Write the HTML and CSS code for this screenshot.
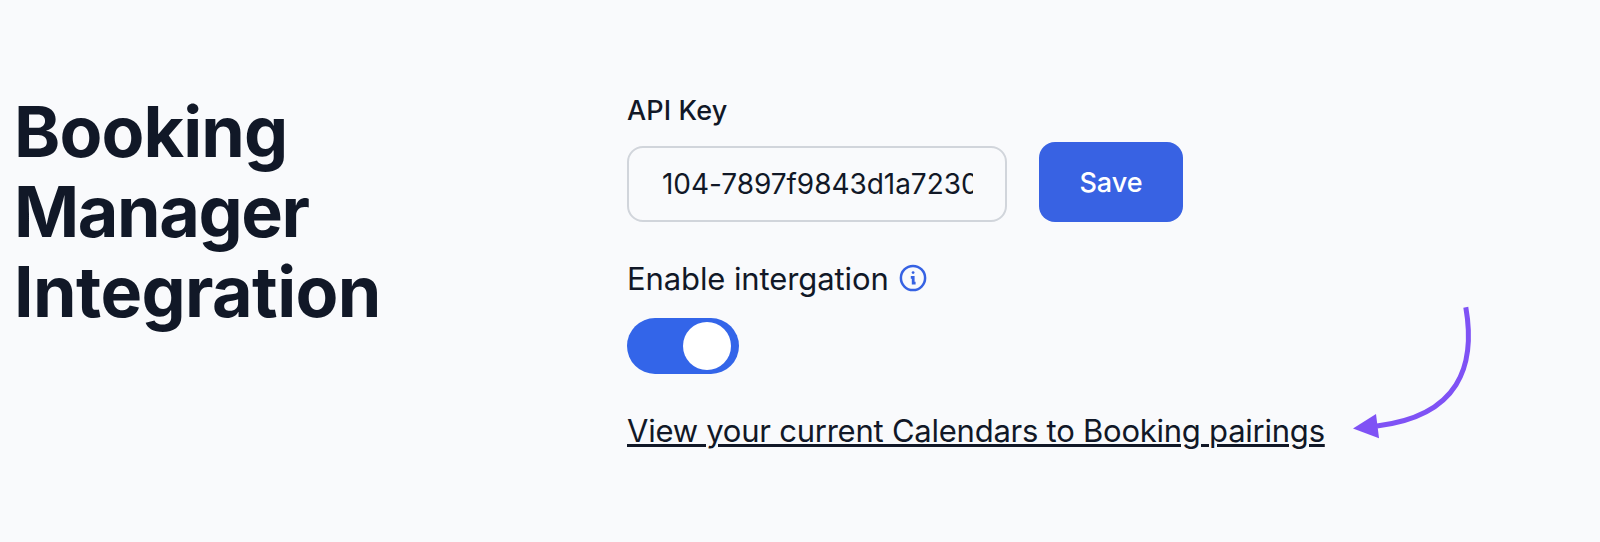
FILE: index.html
```
<!DOCTYPE html>
<html lang="en">
	<head>
		<meta charset="UTF-8">
		<meta name="viewport" content="width=device-width, initial-scale=1.0">
		<title>Booking Manager Integration</title>
		<link rel="stylesheet" href="styles.css">
	</head>
	<body>
		<main class="settings">
			<h1><span class="wide">Booking</span> Manager <span class="wider">Integration</span></h1>
			<form class="fields">
				<label class="key-label" for="api-key">API Key</label>
				<div class="key-row">
					<input class="key-input" type="text" id="api-key" value="104-7897f9843d1a7230">
					<button class="save" type="button">Save</button>
				</div>
				<div class="enable">
					<span class="enable-text">Enable intergation</span>
					<svg class="info" viewBox="0 0 28 28">
						<circle cx="14" cy="14" r="12.1" fill="none" stroke="#3662e3" stroke-width="2.5" />
						<circle cx="14.1" cy="8.6" r="1.4" fill="#3662e3" />
						<path d="M11.8 13.3h2.4v5.8h2.4" fill="none" stroke="#3662e3" stroke-width="2.8" />
					</svg>
				</div>
				<label class="toggle">
					<input type="checkbox" checked>
				</label>
				<div class="pairings">
					<a href="#">View your current Calendars to Booking pairings</a>
					<svg class="arrow" viewBox="0 0 160 160">
						<path d="M135.8 17.3C146 76 129 126 47 136" fill="none" stroke="#7f52f5" stroke-width="5" />
						<path d="M23 138.5L46 124L49 148.3Z" fill="#7f52f5" />
					</svg>
				</div>
			</form>
		</main>
	</body>
</html>
```
FILE: styles.css
```
* { box-sizing: border-box; }
body {
	margin: 0;
	background: #f9fafc;
	color: #111827;
	font-family: Inter, "Liberation Sans", sans-serif;
}
.settings {
	display: grid;
	grid-template-columns: 400px 1fr;
	column-gap: 213px;
	height: 542px;
	padding: 90px 0 0 14px;
	overflow: hidden;
}
h1 {
	margin: 2px 0 0;
	font-size: 70px;
	font-weight: 700;
	line-height: 80px;
	letter-spacing: -1.4px;
}
h1 .wide { letter-spacing: -.9px; }
h1 .wider { letter-spacing: -.6px; }
.fields {
	display: flex;
	flex-direction: column;
	align-items: flex-start;
}
.key-label {
	padding-top: 1px;
	font-size: 27px;
	font-weight: 500;
	line-height: 40px;
	letter-spacing: .15px;
}
.key-row {
	display: flex;
	align-items: flex-end;
	gap: 32px;
	margin-top: 11px;
}
.key-input {
	width: 380px;
	height: 76px;
	padding: 0 32px;
	border: 2px solid #d1d5db;
	border-radius: 16px;
	background: transparent;
	color: inherit;
	font: 400 28px Inter, "Liberation Sans", sans-serif;
	letter-spacing: -.04px;
	text-indent: 1px;
}
.save {
	width: 144px;
	height: 80px;
	padding: 1px 0 0;
	border: 0;
	border-radius: 16px;
	background: #3862e3;
	color: #fff;
	font: 500 27px Inter, "Liberation Sans", sans-serif;
}
.enable {
	display: flex;
	align-items: center;
	gap: 10px;
	height: 48px;
	margin-top: 33px;
	font-size: 31px;
	line-height: 48px;
}
.enable-text { letter-spacing: -.1px; }
.info {
	width: 28px;
	height: 28px;
	margin-top: -2px;
}
.toggle {
	display: flex;
	justify-content: flex-end;
	width: 112px;
	height: 56px;
	margin-top: 15px;
	padding: 4px 8px;
	border-radius: 28px;
	background: #3365e9;
}
.toggle input {
	-webkit-appearance: none;
	appearance: none;
	width: 48px;
	height: 48px;
	margin: 0;
	border-radius: 50%;
	background: #fff;
}
.pairings {
	display: flex;
	align-items: flex-start;
	gap: 5px;
	margin-top: 33px;
}
.pairings a {
	color: inherit;
	font-size: 31px;
	line-height: 48px;
	letter-spacing: -.24px;
	white-space: nowrap;
	text-decoration-thickness: 3px;
	text-underline-offset: 2px;
}
.arrow {
	flex: none;
	width: 160px;
	height: 160px;
	margin-top: -117px;
}
```
